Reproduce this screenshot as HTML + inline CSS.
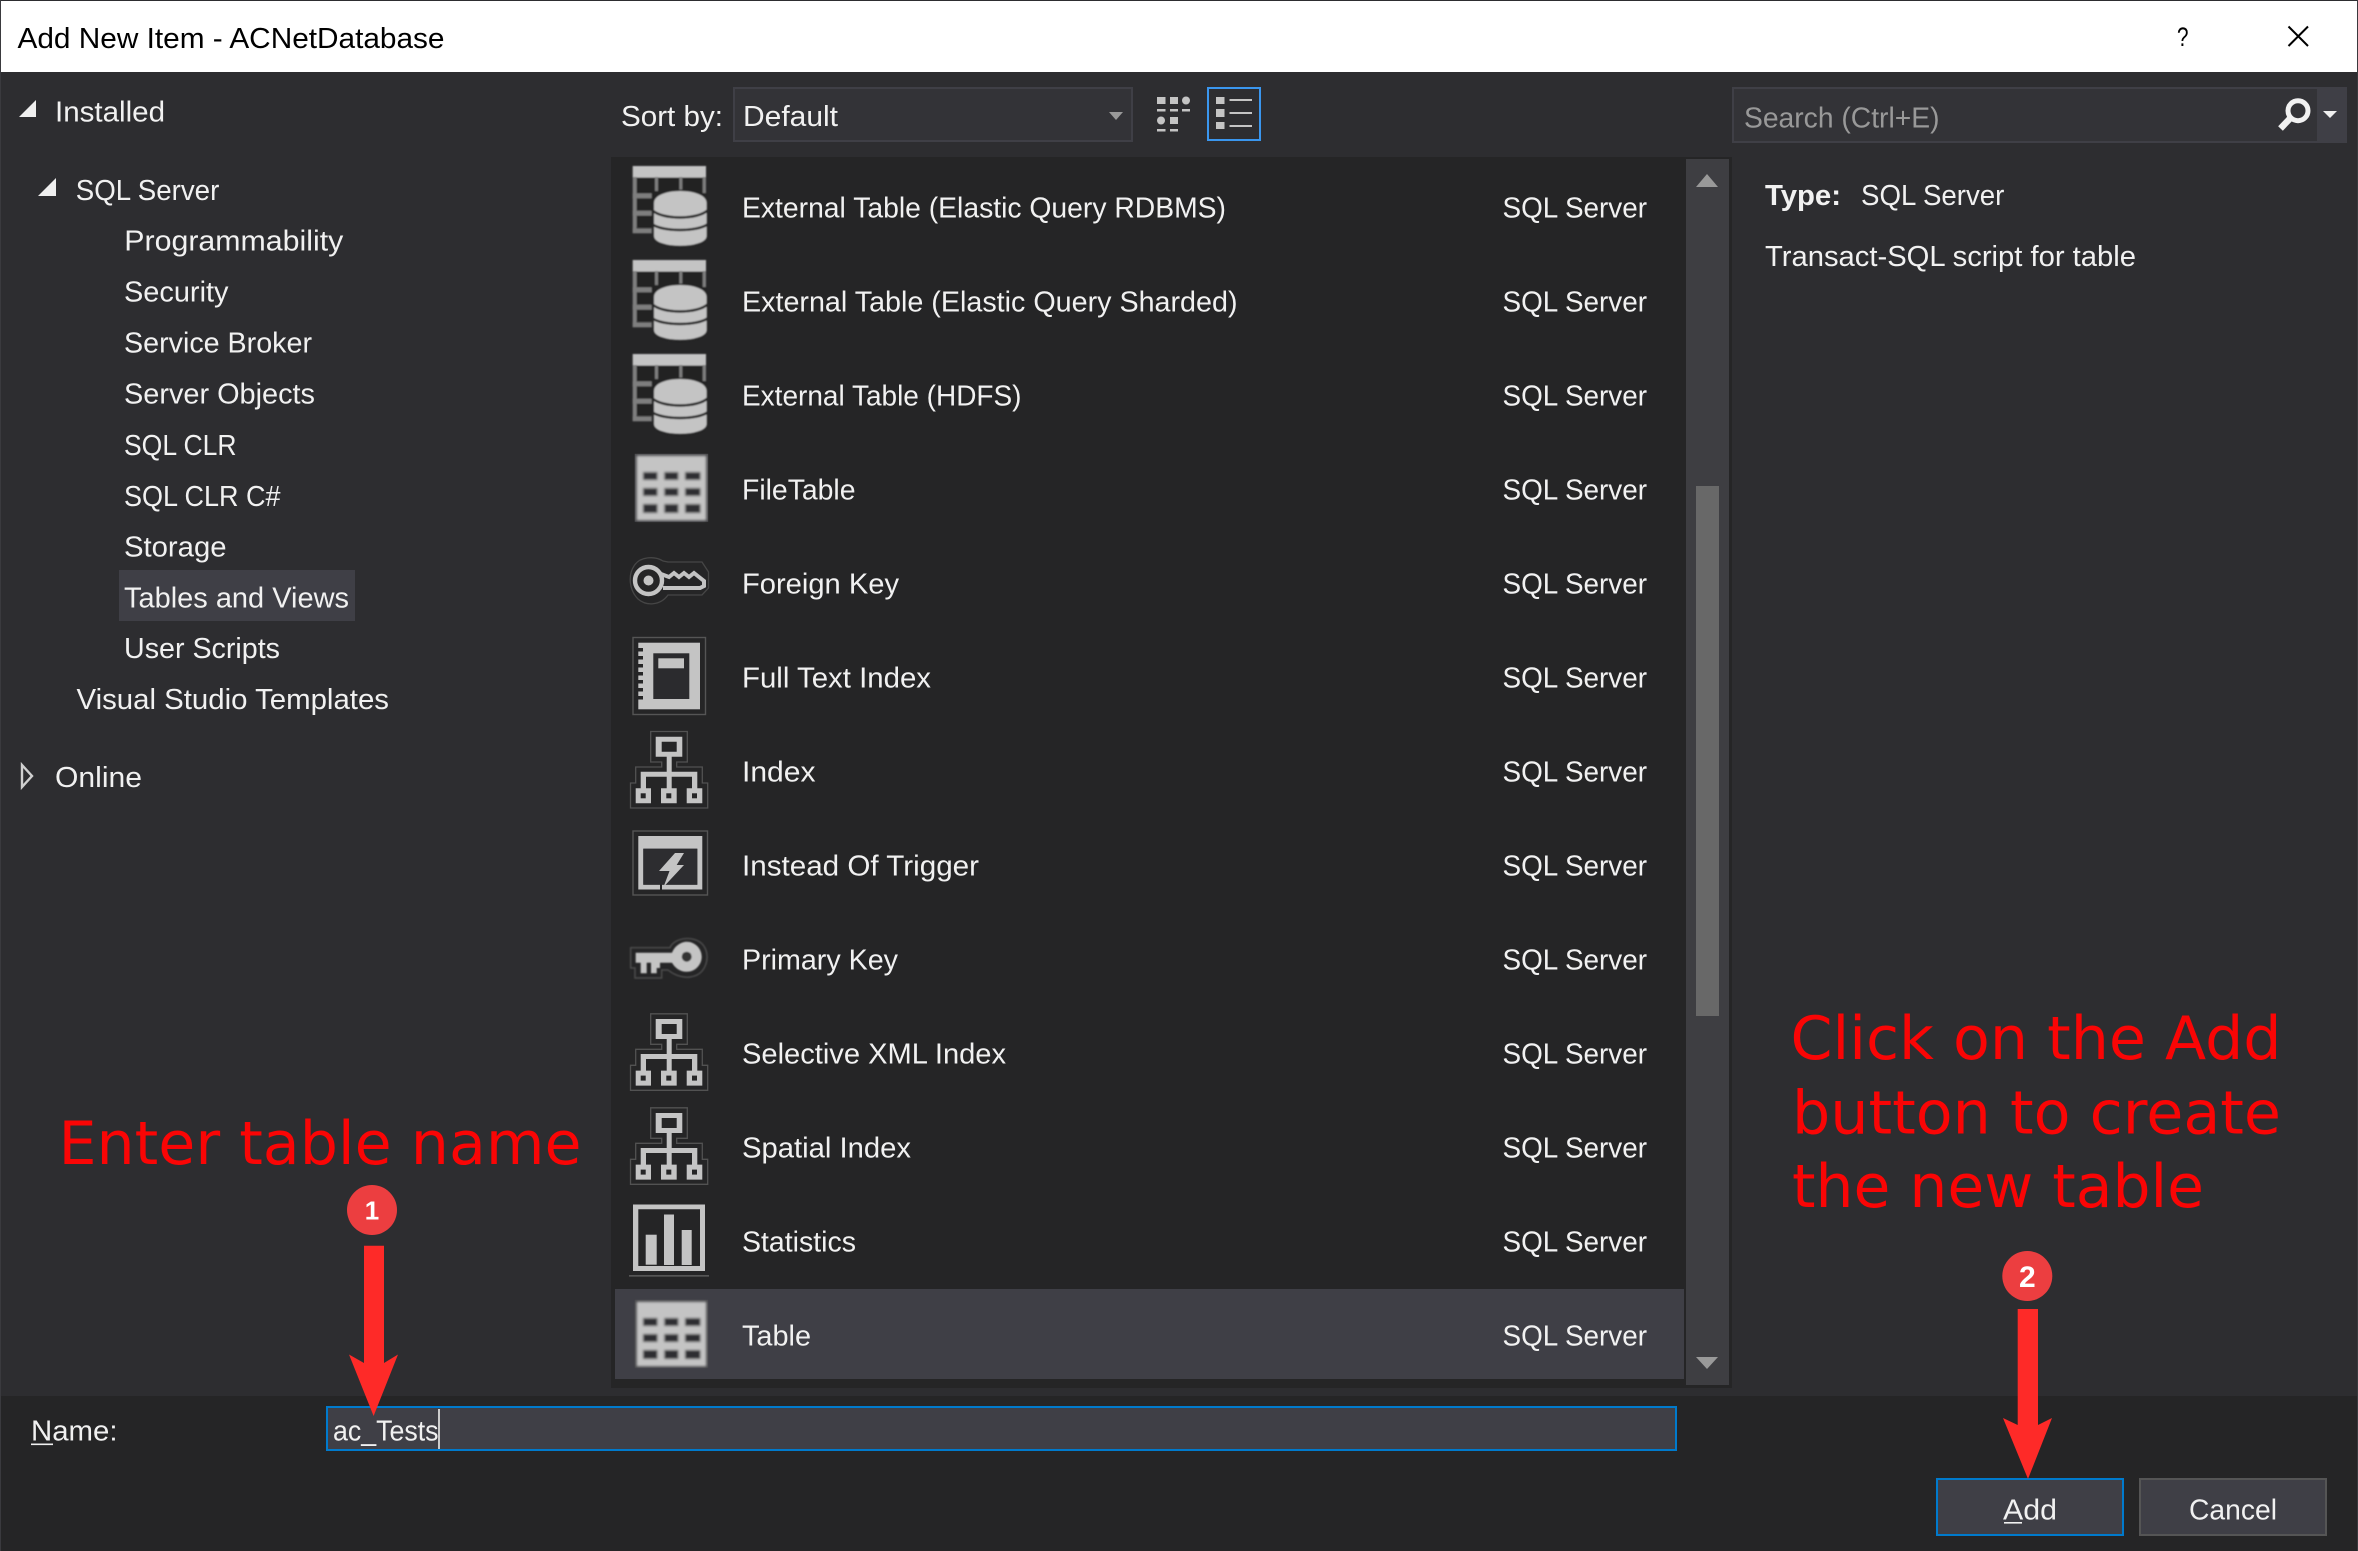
<!DOCTYPE html>
<html lang="en"><head><meta charset="utf-8"><title>Add New Item - ACNetDatabase</title>
<style>
html,body{margin:0;padding:0;background:#2d2d30}
svg{display:block}
text{font-family:"Liberation Sans",sans-serif;font-size:29px;fill:#f1f1f1}
.r{font-family:"DejaVu Sans",sans-serif;font-size:60px;fill:#fa0505}
.d{fill:#252526}
.s{fill:#c4c4c4}
</style></head><body>
<svg xmlns="http://www.w3.org/2000/svg" width="2358" height="1551" viewBox="0 0 2358 1551">
<defs>
<filter id="b" x="-10%" y="-10%" width="120%" height="120%"><feGaussianBlur stdDeviation="0.8"/></filter>
<filter id="b2" x="-10%" y="-10%" width="120%" height="120%"><feGaussianBlur stdDeviation="1.2"/></filter>
<g id="ext" filter="url(#b)">
 <rect x="632.7" y="177" width="73" height="50" fill="#222"/>
 <rect x="632.7" y="166" width="73.3" height="11.5" fill="#c4c4c4"/>
 <g fill="#7e7e7e">
  <rect x="632.7" y="177" width="4" height="56"/>
  <rect x="655" y="177" width="3" height="14"/>
  <rect x="679.3" y="177" width="3" height="14"/>
  <rect x="702.7" y="177" width="3.3" height="16"/>
  <rect x="632.7" y="193.3" width="19" height="5"/>
  <rect x="632.7" y="210.7" width="19" height="5"/>
  <rect x="632.7" y="228.3" width="19" height="5"/>
 </g>
 <path d="M653.3,203C653.3,186 707.3,186 707.3,203V236C707.3,250 653.3,250 653.3,236Z" fill="#c4c4c4" stroke="#252526" stroke-width="1.5"/>
 <path d="M652,210C662,220 698,220 708,210M652,224C662,232 698,232 708,224" fill="none" stroke="#252526" stroke-width="2.6"/>
</g>
<g id="tbl">
 <rect x="634.7" y="1299.8" width="73.5" height="68" fill="#4a4a4d"/>
 <g filter="url(#b2)">
 <rect x="636.7" y="1301.8" width="69.5" height="64.5" fill="#c4c4c4"/>
 <g fill="#2e2e30">
  <rect x="643" y="1318" width="14.5" height="8"/><rect x="664.3" y="1318" width="14" height="8"/><rect x="685" y="1318" width="15.5" height="8"/>
  <rect x="643" y="1334" width="14.5" height="8"/><rect x="664.3" y="1334" width="14" height="8"/><rect x="685" y="1334" width="15.5" height="8"/>
  <rect x="643" y="1350" width="14.5" height="9"/><rect x="664.3" y="1350" width="14" height="9"/><rect x="685" y="1350" width="15.5" height="9"/>
 </g>
 </g>
</g>
<g id="idx">
 <path d="M650.7,731.5H687.3V762H676.7V767H702.3V783H707.7V808H630.5V783H635.7V767H661.7V762H650.7Z" fill="none" stroke="#525252" stroke-width="1.3"/>
 <path fill-rule="evenodd" class="s" d="M655.7,736.7H682.3V756.7H671.7V771.7H697.3V788.3H702.3V803.3H686.7V788.3H692V776.7H671.7V788.3H676.7V803.3H661V788.3H666.7V776.7H646V788.3H651V803.3H635.7V788.3H640.7V771.7H666.7V756.7H655.7ZM661.7,741.7V751.7H676.7V741.7Z"/>
 <rect x="640.7" y="793.3" width="5" height="5" fill="#252526"/>
 <rect x="666.3" y="793.3" width="5" height="5" fill="#252526"/>
 <rect x="692" y="793.3" width="5" height="5" fill="#252526"/>
</g>
</defs>

<!-- window -->
<rect width="2358" height="1551" fill="#2d2d30"/>
<rect x="0" y="1396" width="2358" height="155" fill="#252526"/>
<rect x="0" y="0" width="2358" height="72" fill="#fff"/>
<rect x="0" y="0" width="2358" height="1" fill="#2d2d30"/>
<rect x="0" y="0" width="1" height="1551" fill="#3a3a3e"/>
<rect x="2357" y="0" width="1" height="1551" fill="#3a3a3e"/>

<!-- title -->
<text x="17.5" y="48" style="fill:#000" textLength="427" lengthAdjust="spacingAndGlyphs">Add New Item - ACNetDatabase</text>
<text x="2177" y="46" style="fill:#000;font-size:27px" textLength="11.5" lengthAdjust="spacingAndGlyphs">?</text>
<path d="M2288.5,26.5L2308,46M2308,26.5L2288.5,46" stroke="#000" stroke-width="2" fill="none"/>

<!-- tree -->
<polygon points="36,100 36,117 19,117" fill="#efefef"/>
<text x="55" y="121.7" textLength="110" lengthAdjust="spacingAndGlyphs">Installed</text>
<polygon points="56,178 56,196 38,196" fill="#efefef"/>
<text x="75.8" y="200" textLength="143.5" lengthAdjust="spacingAndGlyphs">SQL Server</text>
<text x="124.3" y="250.7" textLength="219" lengthAdjust="spacingAndGlyphs">Programmability</text>
<text x="124" y="301.7" textLength="104.5" lengthAdjust="spacingAndGlyphs">Security</text>
<text x="124" y="352.7" textLength="188" lengthAdjust="spacingAndGlyphs">Service Broker</text>
<text x="124" y="403.5" textLength="191" lengthAdjust="spacingAndGlyphs">Server Objects</text>
<text x="124" y="455" textLength="112.5" lengthAdjust="spacingAndGlyphs">SQL CLR</text>
<text x="124" y="506" textLength="156.5" lengthAdjust="spacingAndGlyphs">SQL CLR C#</text>
<text x="124" y="556.7" textLength="102.5" lengthAdjust="spacingAndGlyphs">Storage</text>
<rect x="119" y="570" width="236" height="51" fill="#3f3f46"/>
<text x="124" y="607.3" textLength="225" lengthAdjust="spacingAndGlyphs">Tables and Views</text>
<text x="124" y="658" textLength="156" lengthAdjust="spacingAndGlyphs">User Scripts</text>
<text x="76.5" y="709" textLength="312.5" lengthAdjust="spacingAndGlyphs">Visual Studio Templates</text>
<polygon points="22,765 32,776 22,787" fill="none" stroke="#d0d0d0" stroke-width="2.4"/>
<text x="55" y="787" textLength="87" lengthAdjust="spacingAndGlyphs">Online</text>

<!-- toolbar -->
<text x="621" y="126" textLength="102" lengthAdjust="spacingAndGlyphs">Sort by:</text>
<rect x="734" y="88" width="398" height="53" fill="#333337" stroke="#3f3f46" stroke-width="2"/>
<text x="743" y="126" textLength="95" lengthAdjust="spacingAndGlyphs">Default</text>
<polygon points="1109,112 1123,112 1116,120" fill="#999"/>
<g fill="#c4c4c4">
 <rect x="1157" y="97" width="8.5" height="7"/><rect x="1170" y="97" width="8" height="7"/><circle cx="1186" cy="100.5" r="4"/>
 <rect x="1157" y="109" width="8.5" height="2.5"/><rect x="1170" y="109" width="8" height="2.5"/><rect x="1182" y="109" width="8" height="2.5"/>
 <circle cx="1161" cy="120.5" r="4"/><rect x="1170" y="117" width="8" height="7"/>
 <rect x="1157" y="129" width="8.5" height="2.5"/><rect x="1170" y="129" width="8" height="2.5"/>
</g>
<rect x="1208" y="88" width="52" height="52" fill="none" stroke="#3a96ee" stroke-width="2"/>
<g fill="#c4c4c4">
 <rect x="1216" y="97" width="8.5" height="7"/><rect x="1216" y="109" width="8.5" height="8"/><rect x="1216" y="122" width="8.5" height="7"/>
 <rect x="1229.5" y="99" width="22.5" height="2"/><rect x="1229.5" y="112" width="22.5" height="2"/><rect x="1229.5" y="125" width="22.5" height="2"/>
</g>

<!-- search -->
<rect x="1733" y="88" width="613" height="54" fill="#333337" stroke="#3f3f46" stroke-width="2"/>
<rect x="2317" y="87" width="30" height="56" fill="#3f3f46"/>
<text x="1744" y="127.7" style="fill:#999" textLength="195.5" lengthAdjust="spacingAndGlyphs">Search (Ctrl+E)</text>
<circle cx="2298" cy="110.7" r="10" fill="none" stroke="#f1f1f1" stroke-width="5"/>
<path d="M2290,118.5L2280.5,128.5" stroke="#f1f1f1" stroke-width="6.5" fill="none"/>
<polygon points="2323,111 2337,111 2330,118" fill="#f1f1f1"/>

<!-- list -->
<rect x="611" y="157" width="1121" height="1231" fill="#252526"/>
<rect x="1686" y="159" width="43" height="1226" fill="#3e3e42"/>
<rect x="1696" y="486" width="23" height="530" fill="#686868"/>
<polygon points="1707,174 1718,187 1696,187" fill="#999"/>
<polygon points="1696,1357 1718,1357 1707,1369" fill="#999"/>
<rect x="615" y="1289" width="1069" height="90" fill="#3f3f46"/>

<g>
<text x="742" y="217.3" textLength="484" lengthAdjust="spacingAndGlyphs">External Table (Elastic Query RDBMS)</text>
<text x="742" y="311.3" textLength="495.5" lengthAdjust="spacingAndGlyphs">External Table (Elastic Query Sharded)</text>
<text x="742" y="405.3" textLength="279.5" lengthAdjust="spacingAndGlyphs">External Table (HDFS)</text>
<text x="742" y="499.3" textLength="113.5" lengthAdjust="spacingAndGlyphs">FileTable</text>
<text x="742" y="593.3" textLength="157" lengthAdjust="spacingAndGlyphs">Foreign Key</text>
<text x="742" y="687.3" textLength="189" lengthAdjust="spacingAndGlyphs">Full Text Index</text>
<text x="742" y="781.3" textLength="73.5" lengthAdjust="spacingAndGlyphs">Index</text>
<text x="742" y="875.3" textLength="237" lengthAdjust="spacingAndGlyphs">Instead Of Trigger</text>
<text x="742" y="969.3" textLength="156" lengthAdjust="spacingAndGlyphs">Primary Key</text>
<text x="742" y="1063.3" textLength="264" lengthAdjust="spacingAndGlyphs">Selective XML Index</text>
<text x="742" y="1157.3" textLength="169" lengthAdjust="spacingAndGlyphs">Spatial Index</text>
<text x="742" y="1251.3" textLength="114" lengthAdjust="spacingAndGlyphs">Statistics</text>
<text x="742" y="1345.3" textLength="69" lengthAdjust="spacingAndGlyphs">Table</text>
</g>
<g>
<text x="1502.5" y="217.3" textLength="144.5" lengthAdjust="spacingAndGlyphs">SQL Server</text>
<text x="1502.5" y="311.3" textLength="144.5" lengthAdjust="spacingAndGlyphs">SQL Server</text>
<text x="1502.5" y="405.3" textLength="144.5" lengthAdjust="spacingAndGlyphs">SQL Server</text>
<text x="1502.5" y="499.3" textLength="144.5" lengthAdjust="spacingAndGlyphs">SQL Server</text>
<text x="1502.5" y="593.3" textLength="144.5" lengthAdjust="spacingAndGlyphs">SQL Server</text>
<text x="1502.5" y="687.3" textLength="144.5" lengthAdjust="spacingAndGlyphs">SQL Server</text>
<text x="1502.5" y="781.3" textLength="144.5" lengthAdjust="spacingAndGlyphs">SQL Server</text>
<text x="1502.5" y="875.3" textLength="144.5" lengthAdjust="spacingAndGlyphs">SQL Server</text>
<text x="1502.5" y="969.3" textLength="144.5" lengthAdjust="spacingAndGlyphs">SQL Server</text>
<text x="1502.5" y="1063.3" textLength="144.5" lengthAdjust="spacingAndGlyphs">SQL Server</text>
<text x="1502.5" y="1157.3" textLength="144.5" lengthAdjust="spacingAndGlyphs">SQL Server</text>
<text x="1502.5" y="1251.3" textLength="144.5" lengthAdjust="spacingAndGlyphs">SQL Server</text>
<text x="1502.5" y="1345.3" textLength="144.5" lengthAdjust="spacingAndGlyphs">SQL Server</text>
</g>

<!-- icons -->
<use href="#ext"/>
<use href="#ext" y="94"/>
<use href="#ext" y="188"/>
<use href="#tbl" y="-846"/>
<use href="#tbl"/>

<!-- foreign key -->
<path d="M663,561C655,556 640,556 634,566C628,575 629,590 638,599C646,606 660,606 668,595H702L708.5,588V572L702,562H668Z" fill="none" stroke="#464646" stroke-width="1.3"/>
<circle cx="648.5" cy="580.5" r="13.5" fill="none" stroke="#c4c4c4" stroke-width="4.4"/>
<circle cx="648.5" cy="580.5" r="5" fill="#c4c4c4"/>
<path d="M661,574L669,577L674,573L679,577L684,573L689,577L694,573L699,577L704,581V586L700,588H663" fill="none" stroke="#c4c4c4" stroke-width="4"/>

<!-- full text index -->
<rect x="633" y="637.5" width="72.5" height="77" fill="none" stroke="#555" stroke-width="1.4"/>
<rect x="638.3" y="642.7" width="61.7" height="66.6" fill="#c4c4c4"/>
<rect x="653.3" y="653.3" width="36" height="45.7" fill="#2b2b2e"/>
<rect x="658.3" y="658.3" width="25.7" height="10" fill="#c4c4c4"/>
<g fill="#252526">
 <rect x="638" y="648" width="5" height="3.5"/><rect x="638" y="656" width="5" height="3.5"/><rect x="638" y="664" width="5" height="3.5"/><rect x="638" y="672" width="5" height="3.5"/><rect x="638" y="680" width="5" height="3.5"/><rect x="638" y="688" width="5" height="3.5"/><rect x="638" y="696" width="5" height="3.5"/>
</g>

<!-- index -->
<use href="#idx"/>
<use href="#idx" y="282.3"/>
<use href="#idx" y="376.3"/>

<!-- instead of trigger -->
<rect x="633" y="831" width="74.5" height="64" fill="none" stroke="#555" stroke-width="1.4"/>
<path fill-rule="evenodd" class="s" d="M638.3,836H702.3V889.5H662V884.7H697.3V848.7H643.3V884.7H660V889.5H638.3Z"/>
<rect x="643.3" y="848.7" width="54" height="36" fill="#2d2d30"/>
<polygon points="675,853 684,853 676.7,865 684,865 663.5,887 669.5,871 659,871" fill="#c4c4c4"/>

<!-- primary key -->
<g filter="url(#b)">
<path d="M630.7,947.7H670C674,937 698,934 705,948C710,958 706,975 690,977C680,978 673,974 668,970H661.7V978H635V968H630.7Z" fill="none" stroke="#4d4d4d" stroke-width="1.4"/>
<path fill-rule="evenodd" d="M635.7,952.7H672C675,945 682,941.7 686.7,941.7C695,941.7 701.7,948.5 701.7,956.7C701.7,965 695,971.7 686.7,971.7C680,971.7 675,968 672,962.7H660V968H656.7V973.3H651V962.7H646.7V973.3H640.7V962.7H635.7Z" fill="#c4c4c4"/>
<circle cx="686.7" cy="956.7" r="5" fill="#333"/>
</g>

<!-- statistics -->
<path fill-rule="evenodd" class="s" d="M633,1204.5H705V1271H633ZM638.3,1209.3V1266H700V1209.3Z"/>
<rect x="645.7" y="1234.7" width="11" height="30" class="s"/>
<rect x="664" y="1214.5" width="10" height="50.5" class="s"/>
<rect x="681.7" y="1230" width="10" height="35" class="s"/>
<rect x="629" y="1275" width="80" height="1.7" fill="#555"/>

<!-- details -->
<text x="1765" y="205" font-weight="700" textLength="76" lengthAdjust="spacingAndGlyphs">Type:</text>
<text x="1861" y="205" textLength="143.4" lengthAdjust="spacingAndGlyphs">SQL Server</text>
<text x="1765" y="266" textLength="371" lengthAdjust="spacingAndGlyphs">Transact-SQL script for table</text>

<!-- bottom -->
<text x="31" y="1440.7" textLength="86.5" lengthAdjust="spacingAndGlyphs">Name:</text>
<rect x="31" y="1443.5" width="22" height="1.6" fill="#f1f1f1"/>
<rect x="327" y="1407" width="1349" height="43" fill="#3f3f46" stroke="#007acc" stroke-width="2"/>
<text x="333" y="1440.7" textLength="105.5" lengthAdjust="spacingAndGlyphs">ac_Tests</text>
<rect x="438" y="1409" width="2" height="40" fill="#ccc"/>

<rect x="1937" y="1479" width="186" height="56" fill="#3f3f46" stroke="#007acc" stroke-width="2"/>
<text x="2003" y="1519.3" textLength="54" lengthAdjust="spacingAndGlyphs">Add</text>
<rect x="2004" y="1522" width="18" height="1.6" fill="#f1f1f1"/>
<rect x="2140" y="1479" width="186" height="56" fill="#3f3f46" stroke="#555" stroke-width="2"/>
<text x="2189" y="1519.3" textLength="88" lengthAdjust="spacingAndGlyphs">Cancel</text>

<!-- annotations -->
<text class="r" x="58.5" y="1164" textLength="523" lengthAdjust="spacingAndGlyphs">Enter table name</text>
<text class="r" x="1790.5" y="1059" textLength="491" lengthAdjust="spacingAndGlyphs">Click on the Add</text>
<text class="r" x="1792" y="1133.3" textLength="489" lengthAdjust="spacingAndGlyphs">button to create</text>
<text class="r" x="1792" y="1207" textLength="412" lengthAdjust="spacingAndGlyphs">the new table</text>

<ellipse cx="372" cy="1210" rx="25" ry="25" fill="#ec3e40"/>
<text x="372" y="1219.3" text-anchor="middle" style="font-size:26px;font-weight:700;fill:#fff">1</text>
<polygon points="364,1245.7 384,1245.7 384,1363 398,1354.5 373.6,1416 349,1354.5 364,1363" fill="#fe2a28"/>

<ellipse cx="2027.3" cy="1276" rx="25" ry="25" fill="#ec3e40"/>
<text x="2027.3" y="1287" text-anchor="middle" style="font-size:30px;font-weight:700;fill:#fff">2</text>
<polygon points="2017.7,1309 2038,1309 2038,1425 2052,1418 2028,1479 2003,1418 2017.7,1425" fill="#fe2a28"/>
</svg>
</body></html>
